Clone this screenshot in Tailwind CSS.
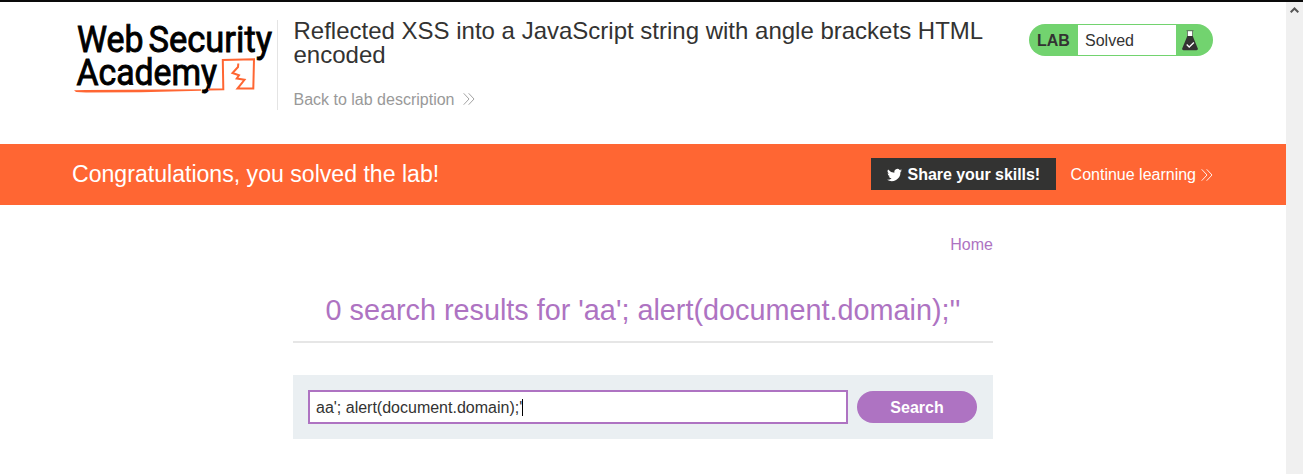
<!DOCTYPE html>
<html lang="en">
<head>
<meta charset="utf-8">
<title>Reflected XSS into a JavaScript string with angle brackets HTML encoded</title>
<script src="https://cdn.jsdelivr.net/npm/@tailwindcss/browser@4"></script>
</head>
<body class="h-[474px] overflow-hidden bg-white font-['Liberation_Sans',Arial,sans-serif] text-base text-[#333332]">
<div class="flex h-full flex-col">
  <div class="h-[2px] shrink-0 bg-[#0a0a0a]"></div>
  <div class="flex min-h-0 flex-1">
    <main class="flex w-[1286px] shrink-0 flex-col">
      <header class="flex h-[142px] shrink-0 items-start pl-[72px] pt-[18px]">
        <svg class="mt-[2px] h-[80px] w-[205px] shrink-0 overflow-visible" viewBox="72 22 205 80" fill="none" font-family="Roboto, sans-serif">
          <g fill="#000" stroke="#000" stroke-width=".9" font-size="37.6">
            <text x="77" y="52.3" textLength="66.5" lengthAdjust="spacingAndGlyphs">Web</text>
            <text x="148.5" y="52.3" textLength="123.5" lengthAdjust="spacingAndGlyphs">Security</text>
            <text x="76.5" y="84.7" font-size="36.5" textLength="140.5" lengthAdjust="spacingAndGlyphs">Academy</text>
          </g>
          <path d="M74 90.300 86 90l115-.8 0 1.600-60 1.400-55 .4-10-.6Z" fill="#f63"/>
          <path d="M208 89.500 223.300 89.200 222.800 60 254 59.300 253.300 88.500 237.500 88.500 244.500 79.800 236.700 78.500 239 75.200 232.500 73 238 67 238.300 63.500" stroke="#f63" stroke-width="2"/>
        </svg>
        <div class="flex h-[90px] w-[736px] flex-col border-l border-[#e4e4e4] pl-[15.5px]">
          <h2 class="mt-[-1px] text-2xl leading-6">Reflected XSS into a JavaScript string with angle brackets HTML<br>encoded</h2>
          <a class="mt-[22px] flex h-5 items-center text-[#999]"><span class="pt-[2px] leading-5">Back to lab description</span>
            <svg class="ml-[9px] h-3 w-3" viewBox="0 0 12 12" fill="none" stroke="currentColor" stroke-width=".9"><path d="M.7.3 6 6 .7 11.7M5.700.3 11 6 5.700 11.700"/></svg>
          </a>
        </div>
        <div class="ml-4 mt-[4px] flex h-8 w-[184px] items-center rounded-full bg-[#72d36f]">
          <span class="w-[49px] pl-[8px] pt-[2px] font-bold">LAB</span>
          <span class="flex h-[30px] w-[98px] items-center bg-white pl-[7px] pt-[2px]">Solved</span>
          <svg class="ml-[6px] h-[21px] w-4" viewBox="0 0 16 21"><path d="M5.500 1.200h5v5h-5z" fill="#fff"/><path d="M4.500.6h7M5.500 1v6M10.500 1v6" stroke="#555" stroke-width=".7"/><path d="M5.300 6h5.400l5.100 12.500q.4 1.700-1.200 1.700H1.400Q-.2 20.200.2 18.500Z" fill="#333332"/><path d="m4.700 14.500 2.500 2.500 4.700-4.500" fill="none" stroke="#fff" stroke-width="1.300"/></svg>
        </div>
      </header>
      <section class="flex h-[61px] shrink-0 items-center bg-[#ff6633] pb-px pl-[72px] pr-[73px] text-white">
        <p class="flex-1 text-[23.100px] leading-6">Congratulations, you solved the lab!</p>
        <a class="flex h-8 w-[185px] items-center bg-[#333332] pl-4 font-bold">
          <svg class="mt-px h-[14px] w-[15px]" viewBox="0 2 24 20" fill="#fff"><path d="M24 4.600a9.900 9.900 0 0 1-2.800.8 4.900 4.900 0 0 0 2.200-2.700 9.900 9.900 0 0 1-3.100 1.200 4.900 4.900 0 0 0-8.400 4.500A14 14 0 0 1 1.700 3.100a4.900 4.900 0 0 0 1.500 6.600A4.900 4.900 0 0 1 1 9.100a4.900 4.900 0 0 0 3.900 4.900 5 5 0 0 1-2.200.1 4.900 4.900 0 0 0 4.600 3.400A9.900 9.900 0 0 1 0 19.500a14 14 0 0 0 21.500-12.400A10 10 0 0 0 24 4.600Z"/></svg>
          <span class="ml-[6px] pt-px tracking-[-0.05px]">Share your skills!</span>
        </a>
        <a class="ml-[15px] flex items-center pt-px">Continue learning
          <svg class="ml-[5px] h-3 w-3" viewBox="0 0 12 12" fill="none" stroke="currentColor" stroke-width=".9"><path d="M.7.3 6 6 .7 11.700M5.700.3 11 6 5.700 11.700"/></svg>
        </a>
      </section>
      <div class="ml-[293px] flex w-[700px] flex-col">
        <nav class="mt-[28px] flex h-6 justify-end text-[#ae73c2]"><a>Home</a></nav>
        <div class="mt-[32px] flex h-[54px] justify-center border-b-2 border-[#e6e6e6] text-[#ae73c2]">
          <h1 class="whitespace-nowrap text-[28.800px] leading-[43px]">0 search results for 'aa'; alert(document.domain);''</h1>
        </div>
        <form class="mt-8 flex h-16 items-center bg-[#eaeff2] pl-[15px]">
          <div class="flex h-[34px] w-[540px] items-center border-2 border-[#ae73c2] bg-white pl-[6px] pt-px">
            <span class="pt-px">aa'; alert(document.domain);'</span><span class="h-[17px] w-px bg-black"></span>
          </div>
          <button type="button" class="ml-[9px] h-8 w-[120px] rounded-full bg-[#ae73c2] pt-[2px] font-bold text-white">Search</button>
        </form>
      </div>
    </main>
    <aside class="flex flex-1 justify-center bg-[#f0f0f0] pt-[5px]">
      <svg class="h-[6px] w-[9px]" viewBox="0 0 9 6" fill="none" stroke="#555" stroke-width="2"><path d="M.7 5.300 4.500 1.500 8.300 5.300"/></svg>
    </aside>
  </div>
</div>
</body>
</html>
